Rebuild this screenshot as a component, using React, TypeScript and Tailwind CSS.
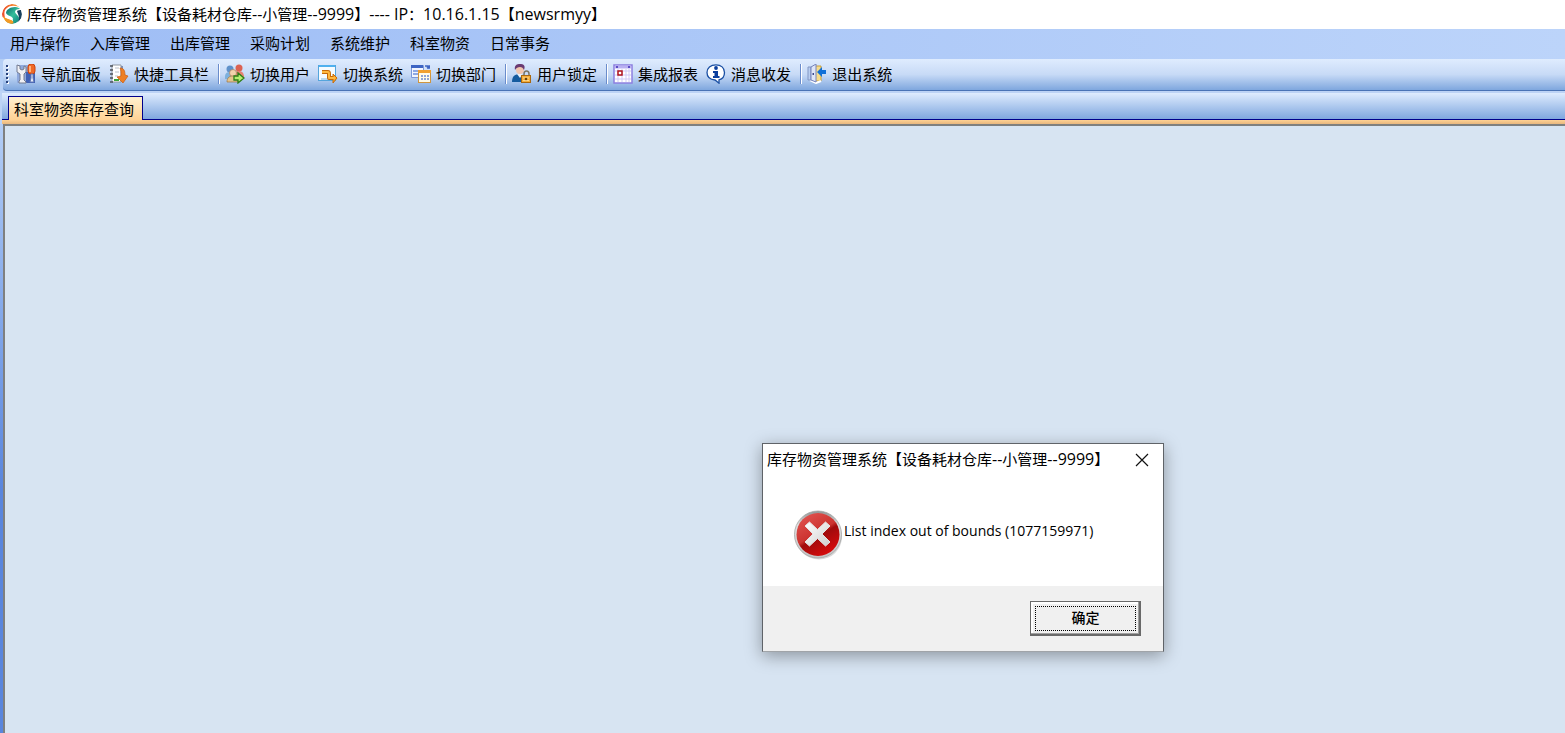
import { Fragment, useState, type ReactNode } from 'react';

const APP_NAME = '库存物资管理系统【设备耗材仓库--小管理--9999】';

const menus = ['用户操作', '入库管理', '出库管理', '采购计划', '系统维护', '科室物资', '日常事务'];

/* --- Icons --- */

function LogoIcon() {
  return (
    <svg viewBox="0 0 20 20" className="size-5 shrink-0" aria-hidden="true">
      <defs>
        <clipPath id="logo-clip">
          <circle cx="10" cy="10" r="10" />
        </clipPath>
        <linearGradient id="logo-teal" x1="0" y1="0" x2="1" y2="1">
          <stop offset="0" stopColor="#0a6668" />
          <stop offset=".5" stopColor="#35bd9c" />
          <stop offset="1" stopColor="#087a78" />
        </linearGradient>
        <linearGradient id="logo-orange" x1="0" y1="0" x2="1" y2="0">
          <stop offset="0" stopColor="#ee4b2b" />
          <stop offset="1" stopColor="#f8a52c" />
        </linearGradient>
      </defs>
      <g clipPath="url(#logo-clip)">
        <path d="M0 13C-1 5 5-1 13 0c3 0 5 2 6 4C14 1 8 1 5 4 2 6 2 9 3 14Z" fill="url(#logo-orange)" />
        <path
          d="M4 9c0-3 4-6 9-6 3 0 4 1 5 2-3 0-5 1-5 3 1 3 5 4 4 8-1 2-4 4-7 4-3 0-6-2-7-4 4 1 8 1 8-1 0-3-6-3-7-6Z"
          fill="url(#logo-teal)"
        />
        <path d="M15 7c1-1 3-1 4-1 2 5 1 10-4 13 4-5 1-8 0-12Z" fill="#17405e" />
        <path d="M1 12c3 3 8 3 10 5 1 2 0 3-2 3-4 0-7-4-8-8Z" fill="#f39a25" />
        <path d="M3 13c3 2 7 2 8 4" fill="none" stroke="#fff" strokeWidth=".8" />
      </g>
    </svg>
  );
}

function ToolsIcon() {
  return (
    <svg viewBox="0 0 20 20" className="size-5" aria-hidden="true">
      <rect x="1" y="1" width="18" height="18" rx="1" fill="#8fa9dd" />
      <path d="M10 8h9v11h-9z" fill="#3f61b5" />
      <path
        d="M1 1l3 1v3l2 1 2-1V2l2 1v5L8 10v6l2 2v1H3v-2l1-1v-6L1 8Z"
        fill="#f0f1f5"
        stroke="#737a90"
        strokeWidth="1"
      />
      <rect x="12" y="0" width="7" height="10" rx="3" fill="#f06a28" stroke="#c9430f" />
      <path d="M14 2v6" stroke="#ffb27a" strokeWidth="2" />
      <path d="M15 10h2v4l1 4h-4l1-4Z" fill="#e8ecf8" stroke="#6177b5" />
    </svg>
  );
}

function QuickBarIcon() {
  return (
    <svg viewBox="0 0 20 20" className="size-5" aria-hidden="true">
      <path d="M3 1h9v17H3z" fill="#fff" stroke="#9097a0" />
      <path d="M13 2v14" stroke="#7d8fb5" strokeWidth="2" />
      <path d="M1 2h3M1 6h3M1 10h3M1 14h3M1 18h3" stroke="#4c5259" strokeWidth="1.5" />
      <path d="M6 4h4M6 8h4M6 12h3" stroke="#b9bfc8" />
      <path d="M5 16h5" stroke="#3ca33a" strokeWidth="2" />
      <path d="M11 4c4 0 5 3 5 7l3 1-5 7-6-6 4-1c0-4 0-6-1-8Z" fill="#ee7f24" stroke="#ca5c0e" strokeWidth=".7" />
    </svg>
  );
}

function SwitchUserIcon() {
  return (
    <svg viewBox="0 0 20 20" className="size-5" aria-hidden="true">
      <circle cx="5" cy="5" r="3.5" fill="#5f91ca" />
      <circle cx="14" cy="4" r="3.5" fill="#dc6252" />
      <path d="M0 13c0-4 2-5 5-5s5 2 5 5v2H0Z" fill="#7db0dd" />
      <path d="M9 12c0-4 2-5 5-5s5 2 5 6v2H9Z" fill="#e58272" />
      <circle cx="8" cy="9" r="3.5" fill="#f2d2ac" stroke="#a97d59" strokeWidth=".7" />
      <path d="M2 18c0-4 2-6 6-6s5 2 5 6Z" fill="#e3c48d" stroke="#9a7444" strokeWidth=".7" />
      <path d="M9 12h4V9l6 5-6 5v-3H9Z" fill="#b5ee70" stroke="#2d7d17" strokeWidth="1.3" />
    </svg>
  );
}

function SwitchSystemIcon() {
  return (
    <svg viewBox="0 0 20 20" className="size-5" aria-hidden="true">
      <rect x=".5" y="1.5" width="17" height="15" fill="#f5fbff" stroke="#55a5dc" />
      <path d="M1 2h16" stroke="#4fb0ee" strokeWidth="2" />
      <path d="M3 15h9" stroke="#bcd9ee" strokeWidth="2" />
      <path d="M4 8h6c1 0 1 1 1 2v4h5" fill="none" stroke="#c76a08" strokeWidth="4" strokeLinejoin="round" />
      <path d="M15 10l4 4-4 5Z" fill="#ffab27" stroke="#c76a08" />
      <path d="M4 8h6c1 0 1 1 1 2v4h6" fill="none" stroke="#ffb83f" strokeWidth="2" strokeLinejoin="round" />
    </svg>
  );
}

function SwitchDeptIcon() {
  return (
    <svg viewBox="0 0 20 20" className="size-5" aria-hidden="true">
      <path d="M.5 1.5h12v12H.5z" fill="#f1f5ff" stroke="#7d98d8" />
      <path d="M0 2.5h12" stroke="#3c64c4" strokeWidth="3" />
      <path d="M2 7h5M2 10h5" stroke="#6d8fdc" strokeWidth="1.5" />
      <path d="M14 2h3v3" fill="none" stroke="#3c64c4" strokeWidth="1.5" />
      <path d="M15 3l4-2v4Z" fill="#3c64c4" />
      <rect x="7.5" y="6.5" width="12" height="12" fill="#fffbe8" stroke="#cf9640" />
      <path d="M7 7.5h13" stroke="#f0a02e" strokeWidth="3" />
      <path d="M10 12h2M13 12h2M16 12h2M10 15h2M13 15h2M16 15h2" stroke="#8fa5d4" strokeWidth="2" />
    </svg>
  );
}

function LockUserIcon() {
  return (
    <svg viewBox="0 0 20 20" className="size-5" aria-hidden="true">
      <path d="M0 18c0-6 3-8 8-8 4 0 5 2 5 8Z" fill="#155b9f" />
      <path d="M5 10l3 4 3-4Z" fill="#e9eff8" />
      <circle cx="8" cy="6" r="4" fill="#f2c6ae" />
      <path d="M3 6c-1-5 2-6 5-6s6 1 4 6c-1-2-2-3-4-3S4 4 3 6Z" fill="#6a3a72" />
      <path d="M12 12v-2c0-4 5-4 5 0v2" fill="none" stroke="#7c7565" strokeWidth="1.5" />
      <rect x="9.5" y="11.5" width="9" height="7" fill="#f5ae3a" stroke="#a9680f" />
      <path d="M11 14h6M11 16.5h6" stroke="#ffd98b" />
      <circle cx="14" cy="15" r="1.3" fill="#6b4208" />
    </svg>
  );
}

function ReportIcon() {
  return (
    <svg viewBox="0 0 20 20" className="size-5" aria-hidden="true">
      <rect x="1" y="1" width="18" height="18" fill="#fff" stroke="#8c7fe0" strokeWidth="1.5" />
      <path d="M2 3h16" stroke="#b9b0f2" strokeWidth="3" />
      <path d="M3 3h2M15 3h2" stroke="#5c4dc4" strokeWidth="2" />
      <path d="M2 7h16M2 11h16M2 15h16M5 5v13M9 5v13M13 5v13M16 5v13" stroke="#cfc9f6" />
      <rect x="5" y="7" width="4" height="4" fill="#fff" stroke="#b0121a" strokeWidth="1.5" />
    </svg>
  );
}

function MessageIcon() {
  return (
    <svg viewBox="0 0 20 20" className="size-5" aria-hidden="true">
      <path
        d="M10 .8c5 0 8.500 3 8.500 7.700 0 4-2 6.500-5.500 7.300v3.400l-4-3.200C4 15.500 1 13 1 8.500 1 4 4.500.8 10 .8Z"
        fill="#fff"
        stroke="#1a4fa3"
        strokeWidth="1.3"
      />
      <circle cx="10" cy="4" r="1.9" fill="#0b3f9e" />
      <path d="M7 7h5v5h1.500v2H7v-2h1.500V9H7Z" fill="#0b3f9e" />
    </svg>
  );
}

function ExitIcon() {
  return (
    <svg viewBox="0 0 20 20" className="size-5" aria-hidden="true">
      <path d="M8 2h6v15H8z" fill="#f6dc8b" stroke="#c79e3d" />
      <path d="M3 16l6 3 5-2" fill="none" stroke="#fff" strokeWidth="2" />
      <path d="M1 3h3v13H1z" fill="#b9cef0" stroke="#8196c4" />
      <path d="M4 3l5-3v18l-5-2Z" fill="#dfe6f8" stroke="#7482ba" />
      <path d="M5.500 10h1.500" stroke="#3c4a8c" strokeWidth="2" />
      <path d="M10 8l5-5v3h4v4h-4v3Z" fill="#0f6fd8" />
    </svg>
  );
}

function ErrorIcon() {
  return (
    <svg viewBox="0 0 50 50" className="size-[50px] shrink-0" aria-hidden="true">
      <defs>
        <linearGradient id="ring" x1="0" y1="0" x2="0" y2="1">
          <stop offset="0" stopColor="#8d9494" />
          <stop offset=".3" stopColor="#e2e2e2" />
          <stop offset="1" stopColor="#c4c4c4" />
        </linearGradient>
        <linearGradient id="ball" x1=".2" y1="0" x2=".8" y2="1">
          <stop offset="0" stopColor="#e05450" />
          <stop offset=".46" stopColor="#cc3330" />
          <stop offset=".54" stopColor="#a00b0d" />
          <stop offset="1" stopColor="#e00b0b" />
        </linearGradient>
        <linearGradient id="cross" x1="0" y1="0" x2="1" y2="1">
          <stop offset="0" stopColor="#fff" />
          <stop offset="1" stopColor="#cfcfcf" />
        </linearGradient>
      </defs>
      <ellipse cx="26" cy="27" rx="23" ry="22.500" fill="#000" opacity=".15" />
      <circle cx="25" cy="24.500" r="23.500" fill="url(#ring)" stroke="#a3a3a3" strokeWidth=".8" />
      <circle cx="25" cy="24.500" r="21.500" fill="url(#ball)" />
      <path
        d="M16.500 12l8 7.500 8-7.500 4.500 4-8 8 8 8-4.500 4-8-7.500-8 7.500-4.500-4 8-8-8-8Z"
        fill="url(#cross)"
        stroke="#e4e4e4"
        strokeLinejoin="round"
      />
    </svg>
  );
}

type Tool = { label: string; icon: ReactNode };

const toolGroups: Tool[][] = [
  [
    { label: '导航面板', icon: <ToolsIcon /> },
    { label: '快捷工具栏', icon: <QuickBarIcon /> },
  ],
  [
    { label: '切换用户', icon: <SwitchUserIcon /> },
    { label: '切换系统', icon: <SwitchSystemIcon /> },
    { label: '切换部门', icon: <SwitchDeptIcon /> },
  ],
  [{ label: '用户锁定', icon: <LockUserIcon /> }],
  [
    { label: '集成报表', icon: <ReportIcon /> },
    { label: '消息收发', icon: <MessageIcon /> },
  ],
  [{ label: '退出系统', icon: <ExitIcon /> }],
];

// Latin letters and digits run one size larger than the Chinese around them
function MixedText({ text }: { text: string }) {
  return text.split(/([\x20-\x7e]+)/).map((part, i) =>
    i % 2 ? <span key={i} className="text-[16px]">{part}</span> : part
  );
}

function ErrorDialog({ onClose }: { onClose: () => void }) {
  return (
    <div
      role="alertdialog"
      aria-labelledby="dialog-title"
      aria-describedby="dialog-message"
      className="absolute left-[762px] top-[443px] w-[402px] border border-[#5f6368] border-b-[#a0a4a8] bg-white shadow-[0_4px_16px_rgba(0,0,0,0.35)]"
    >
      <header className="flex h-8 items-center justify-between pl-1">
        <h2 id="dialog-title" className="pb-0.5 whitespace-nowrap">
          <MixedText text={APP_NAME} />
        </h2>
        <button type="button" aria-label="关闭" onClick={onClose} className="flex h-8 w-[42px] items-center justify-center">
          <svg viewBox="0 0 14 14" className="size-3.5" aria-hidden="true">
            <path d="M1 1l12 12M13 1L1 13" stroke="#111" strokeWidth="1.2" />
          </svg>
        </button>
      </header>
      <div className="flex h-[110px] gap-px pl-[30px] pt-[34px]">
        <ErrorIcon />
        <p id="dialog-message" className="pt-[11px] text-[14px] leading-5 font-medium">
          List index out of bounds (1077159971)
        </p>
      </div>
      <footer className="flex justify-end bg-[#f0f0f0] pt-[15px] pr-[22px] pb-[15px]">
        <button
          type="button"
          onClick={onClose}
          className="h-[35px] w-[111px] border border-r-2 border-b-2 border-[#696969] pt-1 pr-[3px] pb-[3px] pl-1 text-[14px] font-medium shadow-[inset_-1px_-1px_0_#a0a0a0,inset_2px_2px_0_#fff]"
        >
          <span className="flex h-full items-center justify-center border border-dotted border-black pb-0.5">确定</span>
        </button>
      </footer>
    </div>
  );
}

export default function App() {
  const [dialogOpen, setDialogOpen] = useState(true);

  return (
    <div className="relative flex min-h-screen flex-col overflow-hidden bg-[#d7e4f2] font-['Open_Sans','Noto_Sans_CJK_SC',sans-serif] text-[15px] leading-5 text-black">
      {/* --- Title bar --- */}
      <header className="flex h-[29px] items-center gap-[5px] bg-white pb-0.5 pl-0.5">
        <LogoIcon />
        <h1 className="whitespace-pre">
          <MixedText text={`${APP_NAME}---- IP：10.16.1.15【newsrmyy】`} />
        </h1>
      </header>

      {/* --- Menu --- */}
      <nav className="flex h-[30px] items-center bg-linear-to-r from-[#9ebdf5] to-[#bcd4fa] pb-0.5">
        {menus.map((menu) => (
          <button key={menu} type="button" className="px-[10px] whitespace-nowrap">
            {menu}
          </button>
        ))}
      </nav>

      {/* --- Toolbar --- */}
      <div className="bg-[#b5cff5] pl-[3px]">
        <div
          role="toolbar"
          className="flex h-8 items-center rounded-l-sm border-b border-[#4a73b5] bg-linear-to-b from-[#dfecfe] via-[#c7daf6] to-[#7fa7de] pb-0.5 pl-[3px]"
        >
          <div className="mr-[3px] flex w-[3px] flex-col gap-[2px]">
            {[0, 1, 2, 3, 4].map((dot) => (
              <span key={dot} className="size-[2px] bg-[#27417a] shadow-[1px_1px_0_#fff]" />
            ))}
          </div>
          {toolGroups.map((group, i) => (
            <Fragment key={i}>
              {i > 0 && <span className="mr-px ml-[5px] h-5 w-[2px] border-r border-l border-r-white border-l-[#6a8ccb]" />}
              {group.map((tool) => (
                <button key={tool.label} type="button" className="flex items-center gap-[5px] px-1 whitespace-nowrap">
                  {tool.icon}
                  {tool.label}
                </button>
              ))}
            </Fragment>
          ))}
        </div>
      </div>

      {/* --- Tabs --- */}
      <div className="bg-[#bdd3f5] pt-0.5 pl-0.5">
        <div role="tablist" className="flex h-[27px] items-end border-b border-[#00008b] bg-linear-to-b from-[#dfecfe] to-[#7fa7de] pl-1.5">
          <button
            type="button"
            role="tab"
            aria-selected="true"
            className="-mb-px h-6 border border-b-0 border-[#00008b] bg-linear-to-b from-[#fff1cf] to-[#ffd294] pr-2 pl-[5px] whitespace-nowrap"
          >
            科室物资库存查询
          </button>
        </div>
        <div className="h-1 bg-linear-to-b from-[#ffd294] to-[#e8b880]" />
      </div>

      {/* --- Workspace --- */}
      <main className="flex grow bg-linear-to-b from-[#b3cdf5] to-[#5a86dd] to-60% pl-[3px]">
        <div className="grow border-t-2 border-l-2 border-[#7f8080] bg-[#d7e4f2]" />
      </main>

      {dialogOpen && <ErrorDialog onClose={() => setDialogOpen(false)} />}
    </div>
  );
}
